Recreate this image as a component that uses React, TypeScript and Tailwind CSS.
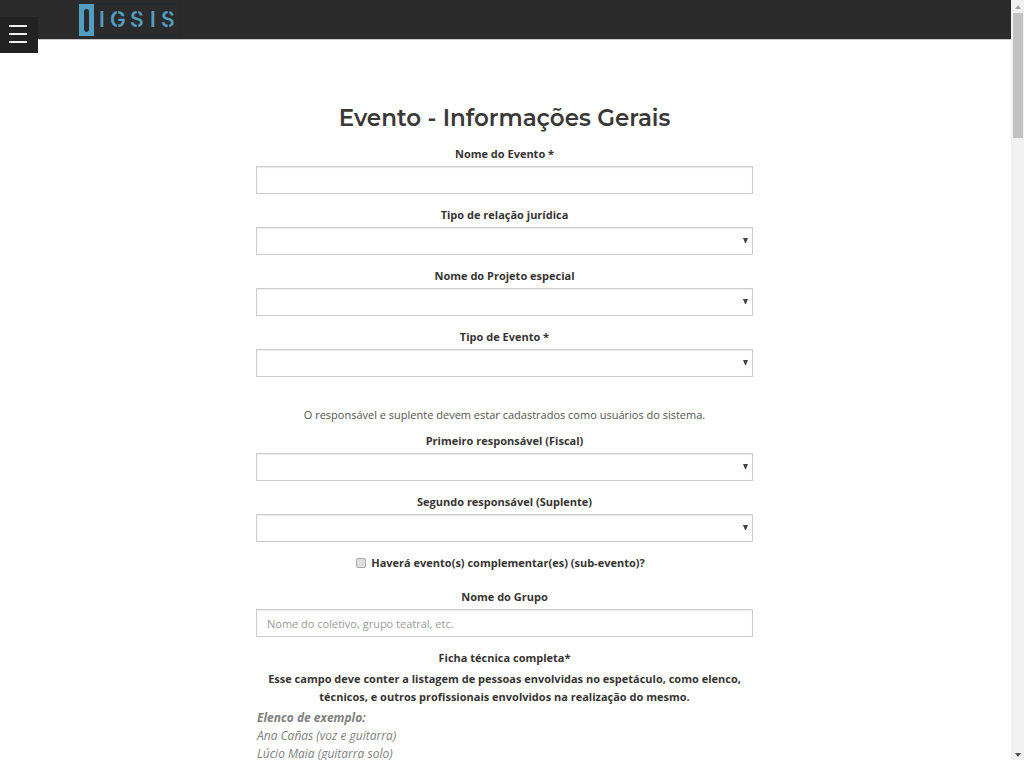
import type { ReactNode } from "react";

const control =
  "block h-7 w-full rounded-none border border-[#cccccc] bg-white px-2.5 text-[11px] text-[#555555] shadow-[inset_0_1px_1px_rgba(0,0,0,0.08)] outline-none placeholder:text-[#999999] focus:border-[#4f9cc4]";

function Logo() {
  return (
    <svg width="102" height="34" viewBox="0 0 102 34" role="img" aria-label="IGSIS">
      <rect x="0.5" y="1.5" width="101" height="31" fill="none" stroke="#222a30" />
      <path
        fill="#529dc2"
        fillRule="evenodd"
        d="M0 1H15V33H0ZM5 8.5Q5 6 7.5 6T10 8.5V26Q10 29 7.5 29T5 26Z"
      />
      <text
        y="24"
        x="20 31 51 71 82"
        fill="#529dc2"
        fontFamily="Inter, sans-serif"
        fontSize="21"
        fontWeight="600"
      >
        IGSIS
      </text>
      <g stroke="#2b2b2b" strokeWidth="1.5">
        <path d="M38.5 7V13M38.5 20V26M58.5 7V13M58.5 20V26M89.5 7V13M89.5 20V26" />
      </g>
    </svg>
  );
}

function Field({ id, label, children }: { id: string; label: string; children: ReactNode }) {
  return (
    <div className="flex flex-col gap-[3px]">
      <label htmlFor={id} className="text-center font-bold text-[#363432]">
        {label}
      </label>
      {children}
    </div>
  );
}

function SelectField({ id, label }: { id: string; label: string }) {
  return (
    <Field id={id} label={label}>
      <div className="relative">
        <select id={id} className={`${control} appearance-none`}>
          <option value=""></option>
        </select>
        <svg
          className="pointer-events-none absolute top-[11px] right-[5px]"
          width="5"
          height="5"
          viewBox="0 0 5 5"
          aria-hidden="true"
        >
          <path d="M0 0H5L3 5H2Z" fill="#444444" />
        </svg>
      </div>
    </Field>
  );
}

function ScrollBar() {
  return (
    <div
      aria-hidden="true"
      className="flex w-[13px] shrink-0 flex-col items-center justify-between bg-[#f1f1f1]"
    >
      <div className="flex w-full flex-col items-center px-px">
        <div className="flex h-[13px] items-center">
          <svg width="6" height="4" viewBox="0 0 6 4">
            <path d="M0 4L3 0L6 4Z" fill="#a3a3a3" />
          </svg>
        </div>
        <div className="h-[125px] w-[10px] bg-[#c1c1c1]" />
      </div>
      <div className="flex h-[11px] items-center">
        <svg width="6" height="4" viewBox="0 0 6 4">
          <path d="M0 0H6L3 4Z" fill="#505050" />
        </svg>
      </div>
    </div>
  );
}

export default function App() {
  return (
    <div className="flex h-screen overflow-hidden bg-white font-['Open_Sans',sans-serif] text-[11px] leading-[18px] text-[#55534f]">
      <div className="relative min-w-0 flex-1 overflow-hidden">
        <header className="flex h-10 items-center border-b border-[#c8c8c8] bg-[#2b2b2b] pl-[79px]">
          <a href="#inicio">
            <Logo />
          </a>
        </header>
        <button
          type="button"
          aria-label="Menu"
          className="absolute top-[17px] left-0 flex h-9 w-[38px] flex-col items-center justify-center gap-1.5 bg-[#222222] pr-0.5 pb-0.5"
        >
          <span className="h-0.5 w-[18px] bg-[#f0f0f0]" />
          <span className="h-0.5 w-[18px] bg-[#f0f0f0]" />
          <span className="h-0.5 w-[18px] bg-[#f0f0f0]" />
        </button>

        <div className="pr-0.5">
          <main className="mx-auto max-w-[497px] pt-[62px]">
            <h2 className="text-center font-['Montserrat',Inter,sans-serif] text-[23px] leading-8 font-semibold whitespace-nowrap text-[#3a3938]">
              Evento - Informações Gerais
            </h2>
            <form className="mt-[11px] flex flex-col gap-3">
              <Field id="nome-evento" label="Nome do Evento *">
                <input id="nome-evento" type="text" className={control} />
              </Field>
              <SelectField id="relacao" label="Tipo de relação jurídica" />
              <SelectField id="projeto" label="Nome do Projeto especial" />
              <SelectField id="tipo" label="Tipo de Evento *" />

              <div className="mt-[17px] flex flex-col gap-2">
                <p className="text-center">
                  O responsável e suplente devem estar cadastrados como usuários do sistema.
                </p>
                <SelectField id="fiscal" label="Primeiro responsável (Fiscal)" />
              </div>
              <SelectField id="suplente" label="Segundo responsável (Suplente)" />

              <div className="mb-1 flex items-center justify-center gap-[5px] pr-2">
                <input
                  id="sub-evento"
                  type="checkbox"
                  className="size-[10px] appearance-none rounded-[2px] border border-[#aaaaaa] bg-[#dedede] checked:bg-[#529dc2]"
                />
                <label htmlFor="sub-evento" className="font-bold text-[#363432]">
                  Haverá evento(s) complementar(es) (sub-evento)?
                </label>
              </div>

              <Field id="grupo" label="Nome do Grupo">
                <input
                  id="grupo"
                  type="text"
                  placeholder="Nome do coletivo, grupo teatral, etc."
                  className={control}
                />
              </Field>

              <section className="flex flex-col gap-[3px]">
                <h3 className="text-center font-bold text-[#363432]">Ficha técnica completa*</h3>
                <p className="text-center font-bold text-[#363432]">
                  Esse campo deve conter a listagem de pessoas envolvidas no espetáculo, como elenco,
                  técnicos, e outros profissionais envolvidos na realização do mesmo.
                </p>
                <div className="pl-px text-xs leading-[18px] text-[#808080] italic">
                  <p className="font-bold">Elenco de exemplo:</p>
                  <p>Ana Cañas (voz e guitarra)</p>
                  <p>Lúcio Maia (guitarra solo)</p>
                </div>
              </section>
            </form>
          </main>
        </div>
      </div>
      <ScrollBar />
    </div>
  );
}
